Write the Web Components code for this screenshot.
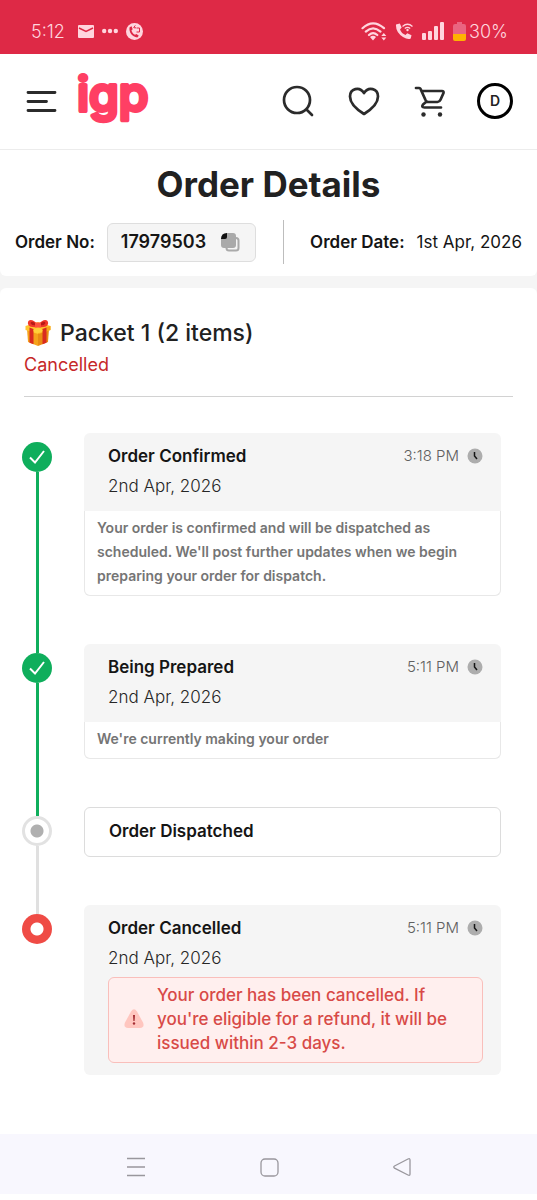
<!DOCTYPE html>
<html lang="en">
<head>
<meta charset="utf-8">
<meta name="viewport" content="width=device-width, initial-scale=1">
<title>Order Details</title>
<style>
  body { margin: 0; background: #fff; color: #212121; font-family: Inter, "Liberation Sans", sans-serif; font-size: 17px; }
</style>
</head>
<body>
<order-app></order-app>

<script>
const define = (name, html) => {
  const template = document.createElement('template');
  template.innerHTML = '<style>*{box-sizing:border-box}svg{display:block;flex:none}button{font:inherit;color:inherit;background:none;border:0;padding:0;margin:0;display:flex;align-items:center;justify-content:center;cursor:pointer}</style>' + html;
  customElements.define(name, class extends HTMLElement {
    constructor() {
      super();
      this.attachShadow({ mode: 'open' }).append(template.content.cloneNode(true));
    }
  });
};

define('status-bar', `
<style>
  :host { display: flex; justify-content: space-between; align-items: center; height: 54px; box-sizing: border-box; padding: 8px 29px 0 31px; background: #de2946; color: #ffd5de; font-size: 18px; font-weight: 300; }
  div { display: flex; align-items: center; }
  .left { gap: 8px; }
  .time { margin-right: 5px; }
  .right { gap: 8px; }
  .power { gap: 3px; }
</style>
<div class="left">
  <span class="time">5:12</span>
  <svg width="16" height="13" viewBox="0 0 16 13"><rect width="16" height="13" rx="1" fill="currentColor"/><path d="M1 3l7 3.500 7-3.500" fill="none" stroke="#de2946" stroke-width="1.500"/></svg>
  <svg width="16" height="6" viewBox="0 0 16 6" fill="currentColor"><circle cx="2.200" cy="3" r="2.200"/><circle cx="8" cy="3" r="2.200"/><circle cx="13.800" cy="3" r="2.200"/></svg>
  <svg width="17" height="17" viewBox="0 0 17 17"><circle cx="8.500" cy="8.500" r="8.500" fill="currentColor"/><path d="M3.600 4.200c-1 5 2.500 9.500 7.700 10.200l1.500-1.700-2.300-1.700-1.500.8C7 10.800 5.700 9 5.500 7.200l1.200-1L5.600 3.300z" fill="#de2946"/><path d="M7.500 4.800L9.300 2.400M8 4.800h2M13.500 5v4h-3M10.500 5h3" fill="none" stroke="#de2946"/></svg>
</div>
<div class="right">
  <svg width="26" height="19" viewBox="0 0 26 19"><g fill="none" stroke="currentColor" stroke-width="2.200" stroke-linecap="round"><path d="M1.500 6.200Q12 -3.500 23 6.200M4.800 9.600Q12 3 19.500 9.600M8 13Q12 9.200 16.300 13"/></g><path d="M9 15q3-2.500 6 0l-3 3.500zM20.300 14h5L22.800 11zM20.300 15.500h5l-2.500 3z" fill="currentColor"/></svg>
  <svg width="18" height="18" viewBox="0 0 18 18"><path d="M1 2.500L4.800 1.500 6.700 5.500 5 7.500q1.500 4 5.500 5.500l1.800-1.700 4.200 2-.8 3.200Q13 18.200 8 15 .5 10 1 2.500" fill="currentColor"/><path d="M7.500 4.500q5-4.500 10 0M9.800 6.500q2.700-2.300 5.400 0" fill="none" stroke="currentColor" stroke-width="1.300"/><circle cx="12.500" cy="8" r="1.200" fill="currentColor"/></svg>
  <svg width="24" height="18" viewBox="0 0 24 18" fill="currentColor"><rect x="1" y="11" width="4" height="7" rx="1"/><rect x="7" y="9" width="4" height="9" rx="1"/><rect x="13" y="4" width="4" height="14" rx="1"/><rect x="19" y="0" width="4" height="18" rx="1"/></svg>
  <div class="power">
    <svg width="13" height="19" viewBox="0 0 13 19"><path d="M4 2V0h5v2h2q2 0 2 2v9H0V4q0-2 2-2z" fill="#ea6480"/><path d="M0 12h13v5q0 2-2 2H2q-2 0-2-2z" fill="#ffb300"/></svg>
    <span>30%</span>
  </div>
</div>`);

define('site-header', `
<style>
  :host { display: flex; align-items: center; height: 96px; box-sizing: border-box; padding: 0 24px 2px 26px; border-bottom: 1px solid #ececec; background: #fff; color: #2b2b2b; }
  .logo { margin: 0 auto 0 18px; display: block; }
  .logo text { font-family: Inter, sans-serif; font-weight: 500; font-size: 48px; fill: #ff3f64; stroke: #ff3f64; stroke-width: 4px; stroke-linejoin: round; }
  nav { display: flex; gap: 30px; }
  nav button { width: 36px; height: 36px; }
  .avatar { border: 3px solid #000; border-radius: 50%; color: #222; font-size: 14px; font-weight: 600; }
</style>
<button aria-label="Menu"><svg width="31" height="24" viewBox="0 0 31 24" fill="none" stroke="currentColor" stroke-width="2.800" stroke-linecap="round"><path d="M2 3.500h27M2 12.500h18.500M2 21.500h27"/></svg></button>
<a class="logo" href="#" aria-label="igp home"><svg width="80" height="78" viewBox="0 0 80 78"><text x="2" y="49">igp</text></svg></a>
<nav>
  <button aria-label="Search"><svg width="36" height="36" viewBox="0 0 36 36" fill="none" stroke="currentColor" stroke-width="2.700" stroke-linecap="round"><circle cx="18" cy="17" r="13"/><path d="M28 27l5 5"/></svg></button>
  <button aria-label="Wishlist"><svg width="36" height="36" viewBox="0 0 36 36" fill="none" stroke="currentColor" stroke-width="2.700" stroke-linejoin="round"><path d="M19 31C11 26 5 20 5 13.500 5 5.500 14.500 3 19 10 23.500 3 33 5.500 33 13.500 33 20 27 26 19 31z"/></svg></button>
  <button aria-label="Cart"><svg width="36" height="36" viewBox="0 0 36 36" fill="none" stroke="currentColor" stroke-width="2.700" stroke-linecap="round" stroke-linejoin="round"><path d="M5 5h3Q9.500 5 10 7l4.500 10q1 2 3 2h9q2 0 3-2.200L32.500 10Q33 8 31 8H10.500M15 19l-3 2.500q-2 3 1.500 3H30"/><g fill="currentColor" stroke="none"><circle cx="12.500" cy="31.500" r="2.200"/><circle cx="29" cy="31.500" r="2.200"/></g></svg></button>
  <button class="avatar" aria-label="Account">D</button>
</nav>`);

define('order-summary', `
<style>
  :host { display: block; padding: 12px 15px; background: #fff; border-radius: 0 0 6px 6px; }
  h1 { margin: 0 0 14px; text-align: center; font-size: 35px; line-height: 44px; font-weight: 700; }
  .row { display: flex; align-items: center; justify-content: space-between; font-weight: 600; line-height: 24px; color: #151515; white-space: nowrap; }
  .group { display: flex; align-items: center; gap: 12px; }
  .number { display: flex; align-items: center; gap: 14px; height: 39px; padding: 0 15px 0 13px; border: 1px solid #dedede; border-radius: 6px; background: #f5f5f5; font-size: 18px; }
  .divider { width: 1px; height: 44px; background: #bdbdbd; }
  time { font-weight: 400; }
</style>
<h1>Order Details</h1>
<div class="row">
  <div class="group"><span>Order No:</span>
    <div class="number"><span>17979503</span>
      <button aria-label="Copy order number"><svg width="20" height="20" viewBox="0 0 20 20"><path d="M15.500 6H16q2.500 0 2.500 2.500V16q0 2.500-2.500 2.500H9Q6.500 18.500 6.500 16" fill="none" stroke="#aaa" stroke-width="2"/><path d="M7 1h6q3 0 3 3v9q0 3-3 3H4q-3 0-3-3V7z" fill="#aaa"/><path d="M7 1v4q0 2-2 2H1q0-6 6-6z" fill="#111"/></svg></button>
    </div>
  </div>
  <div class="divider"></div>
  <div class="group"><span>Order Date:</span><time datetime="2026-04-01">1st Apr, 2026</time></div>
</div>`);

define('gift-icon', `
<style>:host { display: block; }</style>
<svg width="28" height="28" viewBox="0 0 28 28"><path d="M3 10l11 4v13L4 23z" fill="#f5a21b"/><path d="M25 10l-11 4v13l10-4z" fill="#e98b13"/><path d="M1.500 7L14 3l12.500 4v4L14 15 1.500 11z" fill="#ffc52e"/><path d="M14 11l12.500-4v4L14 15z" fill="#f7a51c"/><path d="M5.500 8.500l4 1.500v15.300l-4-1.500zM22.500 8.500l-4 1.500v15.300l4-1.500z" fill="#d92b20"/><path d="M14 6C9-1 3 0 4 5q1 4 10 3 9 1 10-3c1-5-5-6-10 1" fill="#f1382b"/><path d="M13 5.500Q8 1 6.500 4 7 6.500 13 6.500M15 5.500Q20 1 21.500 4 21 6.500 15 6.500" fill="#b81b17"/><path d="M11 3.500h6v5h-6z" fill="#ff5140"/><ellipse cx="14" cy="11.500" rx="4.500" ry="2.500" fill="#ffd03a"/></svg>`);

define('order-packet', `
<style>
  :host { display: block; background: #fff; border-radius: 6px 6px 0 0; padding: 29px 24px 59px; }
  h2 { display: flex; align-items: center; gap: 8px; margin: 0; font-size: 23px; font-weight: 500; line-height: 32px; }
  .status { margin: 4px 0 0; padding-bottom: 19px; border-bottom: 1px solid #d2d2d2; color: #c62828; font-size: 18px; line-height: 24px; }
  ol { list-style: none; margin: 0; padding: 36px 12px 0 0; }
</style>
<h2><gift-icon></gift-icon><slot name="title"></slot></h2>
<p class="status"><slot name="status"></slot></p>
<ol role="list"><slot></slot></ol>`);

define('order-step', `
<style>
  :host { display: flex; gap: 32px; margin-left: -2px; --top: #0fae5c; --bottom: #0fae5c; }
  :host([first]) { --top: transparent; }
  :host([state="pending"]) { --bottom: #e0e0e0; }
  :host([state="cancelled"]) { --top: #e0e0e0; --bottom: transparent; }
  .rail { display: flex; flex-direction: column; align-items: center; width: 30px; flex: none; }
  .top { width: 3px; height: 9px; background: var(--top); }
  .bottom { width: 3px; flex: 1; background: var(--bottom); }
  .dot { width: 30px; height: 30px; border-radius: 50%; background: #0fae5c; display: flex; align-items: center; justify-content: center; }
  .dot svg { display: none; }
  :host([state="done"]) .dot svg { display: block; }
  :host([state="pending"]) .dot { background: radial-gradient(circle, #b0b0b0 6px, #fff 7px); border: 3px solid #e2e2e2; }
  :host([state="cancelled"]) .dot { background: radial-gradient(circle, #fff 6px, #ef4b45 7px); }
  .content { flex: 1; min-width: 0; padding-bottom: 48px; }
  :host([state="cancelled"]) .content { padding-bottom: 0; }
</style>
<div class="rail"><div class="top"></div><div class="dot"><svg width="16" height="14" viewBox="0 0 16 14" fill="none" stroke="#fff" stroke-width="2"><path d="M1 7.500l5 5L15 1"/></svg></div><div class="bottom"></div></div>
<div class="content"><slot></slot></div>`);

define('step-card', `
<style>
  :host { display: block; border-radius: 6px; background: #f5f5f5; }
  .head { padding: 8px 18px 10px 24px; display: grid; grid-template-columns: 1fr auto; line-height: 30px; color: #262626; }
  .title { font-size: 17px; font-weight: 600; color: #151515; }
  .time { display: flex; align-items: center; gap: 8px; font-size: 15px; font-weight: 300; color: #606060; }
  .date { grid-column: 1 / -1; font-size: 17px; font-weight: 300; }
  .note { border: 1px solid #e8e8e8; border-top: 0; border-radius: 0 0 6px 6px; background: #fff; padding: 5px 12px 7px; font-size: 14px; line-height: 24px; font-weight: 600; color: #757575; }
  :host(:not([note])) .note { display: none; }
  :host([plain]) { background: #fff; border: 1px solid #dcdcdc; }
  :host([plain]) .head { padding: 8px 24px 10px; }
  :host([plain]) .time, :host([plain]) .date { display: none; }
  :host([alert]) .head { padding-bottom: 12px; }
  .alert { grid-column: 1 / -1; }
</style>
<div class="head">
  <span class="title"><slot name="title"></slot></span>
  <span class="time"><slot name="time"></slot><svg width="16" height="16" viewBox="0 0 16 16"><circle cx="8" cy="8" r="7.500" fill="#adadad"/><path d="M7.500 4v4l2.500 3" fill="none" stroke="#161616" stroke-width="1.500"/></svg></span>
  <span class="date"><slot name="date"></slot></span>
  <div class="alert"><slot name="alert"></slot></div>
</div>
<div class="note"><slot></slot></div>`);

define('refund-alert', `
<style>
  :host { display: flex; align-items: center; gap: 12px; margin-top: 4px; padding: 5px 12px 7px 14px; border: 1px solid #f9bfbb; border-radius: 6px; background: #ffefee; color: #d84a47; font-size: 17px; line-height: 24px; font-weight: 500; }
</style>
<svg width="22" height="20" viewBox="0 0 22 20"><path d="M8 2.500q3-4.500 6 0l6 11q2 5-3 5.500H5q-5-.5-3-5.500z" fill="#ffc6bf"/><path d="M10 6h2l-.4 6h-1.200z" fill="#a52e33"/><circle cx="11" cy="14.500" r="1.200" fill="#a52e33"/></svg>
<div><slot></slot></div>`);

define('system-nav', `
<style>
  :host { display: flex; justify-content: center; align-items: center; gap: 97px; height: 60px; padding-top: 6px; box-sizing: border-box; background: #f8f7fe; color: #99979d; }
  button { width: 36px; height: 36px; }
</style>
<button aria-label="Recent apps"><svg width="18" height="20" viewBox="0 0 18 20" fill="none" stroke="currentColor" stroke-width="1.500"><path d="M0 1.500h18M0 10h18M0 18.500h18"/></svg></button>
<button aria-label="Home"><svg width="20" height="20" viewBox="0 0 20 20" fill="none" stroke="currentColor" stroke-width="1.300"><rect x="2" y="2" width="17" height="17" rx="4"/></svg></button>
<button aria-label="Back"><svg width="20" height="20" viewBox="0 0 20 20" fill="none" stroke="currentColor" stroke-width="1.300" stroke-linejoin="round"><path d="M2.500 9L16 2q2-1 2 1v14q0 2-2 1L2.500 11.200q-1.500-1.200 0-2.200z"/></svg></button>`);

define('order-app', `
<style>
  :host { display: block; }
  main { background: #f5f5f5; display: grid; gap: 12px; }
</style>
<status-bar></status-bar>
<site-header></site-header>
<main>
  <order-summary></order-summary>
  <order-packet>
    <span slot="title">Packet 1 (2 items)</span>
    <span slot="status">Cancelled</span>
    <order-step role="listitem" first state="done"><step-card note>
      <span slot="title">Order Confirmed</span><span slot="time">3:18 PM</span><span slot="date">2nd Apr, 2026</span>
      Your order is confirmed and will be dispatched as scheduled. We'll post further updates when we begin preparing your order for dispatch.
    </step-card></order-step>
    <order-step role="listitem" state="done"><step-card note>
      <span slot="title">Being Prepared</span><span slot="time">5:11 PM</span><span slot="date">2nd Apr, 2026</span>
      We're currently making your order
    </step-card></order-step>
    <order-step role="listitem" state="pending"><step-card plain>
      <span slot="title">Order Dispatched</span>
    </step-card></order-step>
    <order-step role="listitem" state="cancelled"><step-card alert>
      <span slot="title">Order Cancelled</span><span slot="time">5:11 PM</span><span slot="date">2nd Apr, 2026</span>
      <refund-alert slot="alert">Your order has been cancelled. If you're eligible for a refund, it will be issued within 2-3 days.</refund-alert>
    </step-card></order-step>
  </order-packet>
</main>
<system-nav></system-nav>`);
</script>
</body>
</html>
